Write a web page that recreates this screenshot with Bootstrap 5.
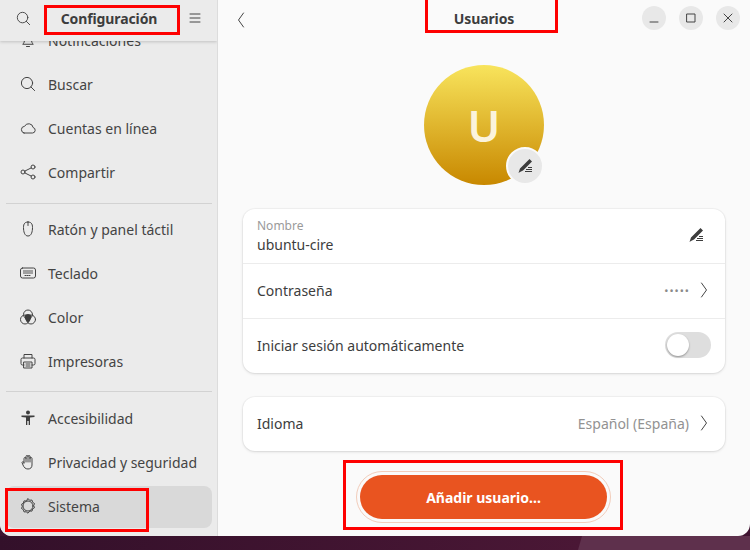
<!DOCTYPE html>
<html lang="es">
<head>
  <meta charset="UTF-8">
  <title>Configuración - Usuarios</title>
  <link href="https://cdn.jsdelivr.net/npm/bootstrap@5.3.3/dist/css/bootstrap.min.css" rel="stylesheet">
  <style>
    html, body { height: 100%; }
    body {
      width: 750px;
      height: 550px;
      overflow: hidden;
      position: relative;
      font-family: "Noto Sans", "Open Sans", sans-serif;
      font-size: 14px;
      color: #3d3d3d;
      background: linear-gradient(106deg, #33102a 0, #4a1735 559px, #5e304c 560px, #5e304c 100%) bottom / 100% 14px no-repeat #3f1330;
    }
    .app-window {
      height: 536px;
      border-radius: 0 0 12px 12px;
      overflow: hidden;
      background: #fafafa;
    }
    .side-pane {
      width: 218px;
      flex: none;
      background: #ebebeb;
      border-right: 1px solid #dcdcdc;
    }
    .pane-head {
      height: 41px;
      flex: none;
      position: relative;
      z-index: 2;
    }
    .side-pane .pane-head {
      padding-bottom: 4px;
      background: #ebebeb;
      box-shadow: 0 1px 3px rgba(0, 0, 0, .18);
    }
    .side-pane .pane-head svg { margin-top: -1px; }
    .head-title { font-weight: 700; font-size: 14px; letter-spacing: -.1px; color: #3d3d3d; }
    .side-pane .head-title { padding-right: 2px; }
    .side-list { margin-top: -22px; padding: 0 5px 0 6px; }
    .side-item {
      height: 42px;
      margin-bottom: 2px;
      padding-left: 14px;
      gap: 12px;
      border-radius: 8px;
      color: #444;
    }
    .side-item svg { width: 16px; height: 16px; flex: none; }
    .side-item.is-selected { background: #d9d9d9; }
    .item-up { padding-bottom: 2px; }
    .side-sep { height: 1px; background: #d2d2d2; }
    .sep-top { margin: 10px 0 4px; }
    .sep-bottom { margin: 9px 0 6px; }
    .ico { fill: none; stroke: #444; stroke-width: 1; stroke-linecap: round; stroke-linejoin: round; }
    .ico-fill { fill: #3d3d3d; stroke: none; }
    .back-btn { margin-left: 19px; }
    .win-ctl {
      width: 24px;
      height: 24px;
      border-radius: 50%;
      background: #e8e8e8;
    }
    .win-ctl svg { width: 12px; height: 12px; }
    .ctl-row { gap: 13px; right: 10px; top: 6px; position: absolute; }
    .head-center { position: absolute; left: 0; right: 0; top: 0; bottom: 4px; }
    .avatar-disc {
      width: 120px;
      height: 120px;
      margin-top: 24px;
      border-radius: 50%;
      background: linear-gradient(180deg, #f8e45c 0%, #c88800 100%);
      color: #fbf3dc;
      font-size: 44px;
      font-weight: 600;
      position: relative;
    }
    .avatar-edit {
      position: absolute;
      right: 0;
      bottom: 0;
      width: 38px;
      height: 38px;
      border-radius: 50%;
      background: #e8e8e8;
      border: 2px solid #fafafa;
    }
    .settings-box {
      width: 482px;
      background: #fff;
      border-radius: 12px;
      box-shadow: 0 0 0 1px rgba(0, 0, 0, .03), 0 1px 3px rgba(0, 0, 0, .12);
    }
    .settings-row {
      height: 55px;
      padding: 0 14px 2px 14px;
      border-bottom: 1px solid #ececec;
    }
    .settings-row:last-child { border-bottom: 0; height: 54px; }
    .name-block { margin-top: 2px; }
    .field-label { font-size: 12px; color: #9a9a9a; line-height: 15px; }
    .field-value { line-height: 19px; margin-top: 2px; }
    .dim-text { color: #929292; }
    .dots-text { color: #8a8a8a; font-size: 11px; letter-spacing: 1px; line-height: 1; margin-right: -1px; }
    .chevron { width: 8px; height: 16px; margin-left: 11px; margin-right: 3px; }
    .toggle-track {
      width: 46px;
      height: 26px;
      border-radius: 13px;
      background: #dedede;
      position: relative;
    }
    .toggle-knob {
      position: absolute;
      left: 2px;
      top: 2px;
      width: 22px;
      height: 22px;
      border-radius: 50%;
      background: #fff;
      box-shadow: 0 1px 2px rgba(0, 0, 0, .35);
    }
    .add-ring {
      margin-top: 20px;
      margin-right: 1px;
      padding: 3px;
      border: 1px solid #f2cdbb;
      border-radius: 26px;
    }
    .add-btn {
      width: 247px;
      height: 44px;
      border: 0;
      border-radius: 22px;
      background: #e95420;
      color: #fff;
      font-weight: 700;
      font-size: 14px;
    }
    .mark-box { position: absolute; border: 3px solid #fe0000; z-index: 5; }
    .mark-a { left: 44px; top: 5px; width: 136px; height: 30px; }
    .mark-b { left: 425px; top: -3px; width: 133px; height: 36px; }
    .mark-c { left: 5px; top: 488px; width: 144px; height: 44px; }
    .mark-d { left: 343px; top: 460px; width: 280px; height: 70px; }
  </style>
</head>
<body>

<div class="app-window d-flex">
  <!-- Sidebar -->
  <div class="side-pane d-flex flex-column overflow-hidden">
    <div class="pane-head d-flex align-items-center">
      <svg class="ms-3" width="15" height="15" viewBox="0 0 16 16"><circle class="ico" cx="7" cy="7" r="5.600"/><path class="ico" d="M11 11l3.600 3.600"/></svg>
      <span class="head-title flex-grow-1 text-center">Configuración</span>
      <svg class="me-3" width="12" height="12" viewBox="0 0 12 12"><path class="ico" d="M1 2h10M1 6h10M1 10h10"/></svg>
    </div>
    <div class="side-list">
      <div class="side-item d-flex align-items-center">
        <svg viewBox="0 0 16 16"><path class="ico" d="M3 12c1-1 1.500-2 1.500-5a3.500 3.500 0 0 1 7 0c0 3 .5 4 1.500 5zM6.500 14.500h3"/></svg>
        <span>Notificaciones</span>
      </div>
      <div class="side-item d-flex align-items-center">
        <svg viewBox="0 0 16 16"><circle class="ico" cx="7" cy="7" r="5.600"/><path class="ico" d="M11 11l3.600 3.600"/></svg>
        <span>Buscar</span>
      </div>
      <div class="side-item d-flex align-items-center">
        <svg viewBox="0 0 16 16"><path class="ico" d="M4 13h8.500a2.800 2.800 0 0 0 .6-5.500A4.500 4.500 0 0 0 4.600 6.300 3.400 3.400 0 0 0 4 13z"/></svg>
        <span>Cuentas en línea</span>
      </div>
      <div class="side-item d-flex align-items-center">
        <svg viewBox="0 0 16 16"><circle class="ico" cx="3" cy="8" r="2"/><circle class="ico" cx="13" cy="3" r="2"/><circle class="ico" cx="13" cy="13" r="2"/><path class="ico" d="M4.800 7.100l6.400-3.200M4.800 8.900l6.400 3.200"/></svg>
        <span>Compartir</span>
      </div>
      <div class="side-sep sep-top"></div>
      <div class="side-item d-flex align-items-center">
        <svg viewBox="0 0 16 16"><path class="ico" d="M8 1C5 1 3.500 2.500 3.500 6.500S4.500 15 8 15s4.500-4.500 4.500-8.500S11 1 8 1zM8 1v3.500"/></svg>
        <span>Ratón y panel táctil</span>
      </div>
      <div class="side-item d-flex align-items-center">
        <svg viewBox="0 0 16 16"><rect class="ico" x=".5" y="3" width="15" height="10" rx="2"/><path class="ico" d="M3.500 6h9M3.500 8h9M5 10.500h6" stroke-dasharray="1 1"/></svg>
        <span>Teclado</span>
      </div>
      <div class="side-item d-flex align-items-center">
        <svg viewBox="0 0 16 16"><circle class="ico" cx="8" cy="5.500" r="4.500"/><circle class="ico" cx="5" cy="10.500" r="4.500"/><circle class="ico" cx="11" cy="10.500" r="4.500"/><path class="ico-fill" d="M8 5c2 0 3.300 1.300 3.300 2.800 0 2.500-1.300 4.400-3.300 5.700-2-1.300-3.300-3.200-3.300-5.700C4.700 6.300 6 5 8 5z"/></svg>
        <span>Color</span>
      </div>
      <div class="side-item d-flex align-items-center">
        <svg viewBox="0 0 16 16"><path class="ico" d="M4 5V1.500h8V5M4 12H2.500A1.500 1.500 0 0 1 1 10.500V6.500A1.500 1.500 0 0 1 2.500 5h11A1.500 1.500 0 0 1 15 6.500v4a1.500 1.500 0 0 1-1.500 1.500H12"/><rect class="ico" x="4" y="9" width="8" height="6"/><path class="ico" d="M6 11h4M6 13h4"/></svg>
        <span>Impresoras</span>
      </div>
      <div class="side-sep sep-bottom"></div>
      <div class="side-item item-up d-flex align-items-center">
        <svg viewBox="0 0 16 16"><circle class="ico-fill" cx="8" cy="2.500" r="2"/><path class="ico-fill" d="M1.500 5.500h13v1.500L10 7.500V15H8.700v-4H7.300v4H6V7.500L1.500 7z"/></svg>
        <span>Accesibilidad</span>
      </div>
      <div class="side-item item-up d-flex align-items-center">
        <svg viewBox="0 0 16 16"><path class="ico" d="M4 9V4.500a1 1 0 0 1 2 0v-2a1 1 0 0 1 2 0 1 1 0 0 1 2 0v2a1 1 0 0 1 2 0V11c0 2.500-1.500 4-4 4s-4-1.500-5-4L2 8.500a1 1 0 0 1 2 .5zM6 4v4M8 2.500V8M10 3v5"/></svg>
        <span>Privacidad y seguridad</span>
      </div>
      <div class="side-item item-up is-selected d-flex align-items-center">
        <svg viewBox="0 0 16 16"><circle class="ico" cx="8" cy="8" r="5"/><path class="ico" d="M8 .8l1.800 1.400 2.200-.1.600 2.200 1.900 1.200-.8 2.100.8 2.100-1.900 1.200-.6 2.200-2.200-.1L8 15.200l-1.800-1.400-2.200.1-.6-2.200-1.900-1.200.8-2.100-.8-2.100 1.900-1.200.6-2.200 2.200.1z"/></svg>
        <span>Sistema</span>
      </div>
    </div>
  </div>

  <!-- Main pane -->
  <div class="flex-grow-1 d-flex flex-column align-items-center">
    <div class="pane-head w-100">
      <div class="head-center d-flex align-items-center justify-content-center">
        <span class="head-title">Usuarios</span>
      </div>
      <svg class="back-btn position-relative" style="top: 8px" width="8" height="18" viewBox="0 0 8 18"><path class="ico" d="M6.500 2L1.500 9l5 7"/></svg>
      <div class="ctl-row d-flex">
        <div class="win-ctl d-flex align-items-center justify-content-center">
          <svg viewBox="0 0 12 12"><path class="ico" d="M2 10h8"/></svg>
        </div>
        <div class="win-ctl d-flex align-items-center justify-content-center">
          <svg viewBox="0 0 12 12"><rect class="ico" x="2" y="2" width="8" height="8"/></svg>
        </div>
        <div class="win-ctl d-flex align-items-center justify-content-center">
          <svg viewBox="0 0 12 12"><path class="ico" d="M2 2l8 8M10 2l-8 8"/></svg>
        </div>
      </div>
    </div>

    <div class="avatar-disc d-flex align-items-center justify-content-center">
      U
      <div class="avatar-edit d-flex align-items-center justify-content-center">
        <svg width="14" height="14" viewBox="0 0 14 14"><path class="ico-fill" d="M11.500 0L14 2.500 5 11.500 2 13 .5 14 1 12.500 2 9.500zM10 8h4v1h-4zM8 10h6v1H8zM7 12h7v1H7z"/></svg>
      </div>
    </div>

    <div class="settings-box" style="margin-top: 24px">
      <div class="settings-row d-flex align-items-center">
        <div class="name-block flex-grow-1">
          <div class="field-label">Nombre</div>
          <div class="field-value">ubuntu-cire</div>
        </div>
        <svg class="me-2" width="14" height="14" viewBox="0 0 14 14"><path class="ico-fill" d="M11.500 0L14 2.500 5 11.500 2 13 .5 14 1 12.500 2 9.500zM10 8h4v1h-4zM8 10h6v1H8zM7 12h7v1H7z"/></svg>
      </div>
      <div class="settings-row d-flex align-items-center">
        <span class="flex-grow-1">Contraseña</span>
        <span class="dots-text">•••••</span>
        <svg class="chevron" viewBox="0 0 8 16"><path class="ico" d="M1.500 1l5 7-5 7"/></svg>
      </div>
      <div class="settings-row d-flex align-items-center">
        <span class="flex-grow-1">Iniciar sesión automáticamente</span>
        <div class="toggle-track"><div class="toggle-knob"></div></div>
      </div>
    </div>

    <div class="settings-box" style="margin-top: 24px">
      <div class="settings-row d-flex align-items-center">
        <span class="flex-grow-1">Idioma</span>
        <span class="dim-text">Español (España)</span>
        <svg class="chevron" viewBox="0 0 8 16"><path class="ico" d="M1.500 1l5 7-5 7"/></svg>
      </div>
    </div>

    <div class="add-ring">
      <button type="button" class="btn add-btn">Añadir usuario...</button>
    </div>
  </div>
</div>

<!-- Red annotation boxes drawn over the screenshot -->
<div class="mark-box mark-a"></div>
<div class="mark-box mark-b"></div>
<div class="mark-box mark-c"></div>
<div class="mark-box mark-d"></div>

<script src="https://cdn.jsdelivr.net/npm/bootstrap@5.3.3/dist/js/bootstrap.bundle.min.js"></script>
</body>
</html>
